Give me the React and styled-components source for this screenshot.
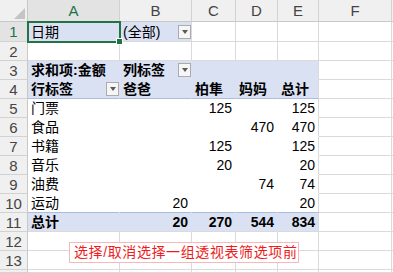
import React from 'react';
import styled, { createGlobalStyle } from 'styled-components';

const GlobalStyle = createGlobalStyle`
  html, body { margin: 0; padding: 0; background: #fff; }
  body {
    font-family: "Liberation Sans", "Noto Sans CJK SC", sans-serif;
    overflow: hidden;
  }
`;

const BLUE = '#d9e1f2';
const LINE = '#dadada';
const PIVOT_LINE = '#a9bde0';

const Sheet = styled.div`
  position: relative;
  width: 393px;
  height: 273px;
  overflow: hidden;
  display: grid;
  grid-template-columns: 28px 92px 72px 44px 42px 41px 73px 1fr;
  grid-template-rows: 22px 20px repeat(12, 19px) 1fr;
`;

const Corner = styled.div`
  background: #f0f0f0;
  border-right: 1px solid #c8c8c8;
  border-bottom: 1px solid #c8c8c8;
  display: flex;
  align-items: flex-end;
  justify-content: flex-end;
  padding: 0 2px 2px 0;
  &::after {
    content: '';
    width: 0;
    height: 0;
    border-left: 11px solid transparent;
    border-bottom: 11px solid #c4c4c4;
  }
`;

const ColHead = styled.div`
  background: ${p => (p.$active ? '#e3e3e3' : '#f0f0f0')};
  color: ${p => (p.$active ? '#217346' : '#444')};
  border-right: 1px solid #d2d2d2;
  border-bottom: 1px solid #c8c8c8;
  display: flex;
  align-items: center;
  justify-content: center;
  font-size: 15px;
`;

const RowHead = styled.div`
  background: ${p => (p.$active ? '#e3e3e3' : '#f0f0f0')};
  color: ${p => (p.$active ? '#217346' : '#444')};
  border-right: 1px solid #c8c8c8;
  border-bottom: 1px solid #d2d2d2;
  display: flex;
  align-items: center;
  justify-content: center;
  font-size: 15px;
`;

const Cell = styled.div`
  position: relative;
  z-index: ${p => (p.$selected ? 2 : 0)};
  display: flex;
  align-items: center;
  justify-content: ${p => (p.$right ? 'flex-end' : 'flex-start')};
  padding: ${p => (p.$right ? '0 3px 0 0' : '0 0 0 3px')};
  background: ${p => p.$fill || '#fff'};
  border-right: 1px solid ${p => p.$vline || LINE};
  border-bottom: 1px solid ${p => p.$hline || LINE};
  font-size: 14px;
  line-height: 18px;
  font-weight: ${p => (p.$bold ? 700 : 400)};
  color: #000;
  white-space: nowrap;
  min-width: 0;
`;

const Drop = styled.span`
  margin-left: auto;
  margin-right: 0;
  width: 13px;
  height: 14px;
  box-sizing: border-box;
  border: 1px solid #ababab;
  background: #f6f6f6;
  display: flex;
  align-items: center;
  justify-content: center;
  flex-shrink: 0;
  &::after {
    content: '';
    width: 0;
    height: 0;
    border-left: 3px solid transparent;
    border-right: 3px solid transparent;
    border-top: 4px solid #5a5a5a;
  }
`;

const Selection = styled.div`
  position: absolute;
  left: -1px;
  top: -1px;
  width: 94px;
  height: 22px;
  box-sizing: border-box;
  border: 2px solid #217346;
  pointer-events: none;
  &::after {
    content: '';
    position: absolute;
    right: -4px;
    bottom: -4px;
    width: 5px;
    height: 5px;
    background: #217346;
    border: 1px solid #fff;
  }
`;

const Note = styled.div`
  position: absolute;
  left: 69px;
  top: 242px;
  width: 230px;
  height: 21px;
  box-sizing: border-box;
  border: 1px solid #f6b8b8;
  background: #fff;
  color: #ee1c1c;
  font-size: 14px;
  line-height: 19px;
  letter-spacing: 0.6px;
  padding-left: 4px;
  white-space: nowrap;
`;

const COLS = ['A', 'B', 'C', 'D', 'E', 'F', ''];

// pivot body rows: label, B, C, D, E
const BODY = [
  ['门票', '', '125', '', '125'],
  ['食品', '', '', '470', '470'],
  ['书籍', '', '125', '', '125'],
  ['音乐', '', '20', '', '20'],
  ['油费', '', '', '74', '74'],
  ['运动', '20', '', '', '20'],
];

function pivotRow(cells, opts) {
  return cells.map((v, i) => {
    const last = i === 4;
    return (
      <Cell
        key={i}
        $fill={opts.fill}
        $bold={opts.bold}
        $right={i > 0 && opts.numeric}
        $vline={last ? LINE : 'transparent'}
        $hline={opts.hline || 'transparent'}
      >
        {v}
        {opts.drops && opts.drops[i] && <Drop />}
      </Cell>
    );
  });
}

function Blank({ count }) {
  return Array.from({ length: count }).map((_, i) => <Cell key={i} />);
}

export default function App() {
  return (
    <>
      <GlobalStyle />
      <Sheet>
        <Corner />
        {COLS.map((c, i) => (
          <ColHead key={i} $active={c === 'A'}>{c}</ColHead>
        ))}

        <RowHead $active>1</RowHead>
        <Cell $fill={BLUE} $selected>
          日期
          <Selection />
        </Cell>
        <Cell $fill={BLUE}>
          (全部)
          <Drop />
        </Cell>
        <Blank count={5} />

        <RowHead>2</RowHead>
        <Blank count={7} />

        <RowHead>3</RowHead>
        {pivotRow(['求和项:金额', '列标签', '', '', ''], {
          fill: BLUE,
          bold: true,
          drops: [false, true],
        })}
        <Blank count={2} />

        <RowHead>4</RowHead>
        {pivotRow(['行标签', '爸爸', '柏隼', '妈妈', '总计'], {
          fill: BLUE,
          bold: true,
          hline: PIVOT_LINE,
          drops: [true],
        })}
        <Blank count={2} />

        {BODY.map((row, r) => (
          <React.Fragment key={r}>
            <RowHead>{r + 5}</RowHead>
            {pivotRow(row, {
              numeric: true,
              hline: r === BODY.length - 1 ? PIVOT_LINE : undefined,
            })}
            <Blank count={2} />
          </React.Fragment>
        ))}

        <RowHead>11</RowHead>
        {pivotRow(['总计', '20', '270', '544', '834'], {
          fill: BLUE,
          bold: true,
          numeric: true,
          hline: LINE,
        })}
        <Blank count={2} />

        <RowHead>12</RowHead>
        <Blank count={7} />
        <RowHead>13</RowHead>
        <Blank count={7} />
        <RowHead />
        <Blank count={7} />

        <Note>选择/取消选择一组透视表筛选项前</Note>
      </Sheet>
    </>
  );
}
